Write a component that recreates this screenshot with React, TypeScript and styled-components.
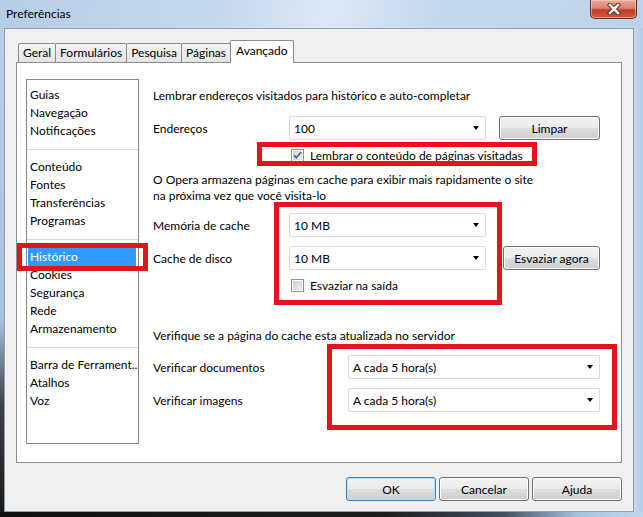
import React from "react";
import styled, { createGlobalStyle } from "styled-components";

const GlobalStyle = createGlobalStyle`
  html, body {
    margin: 0;
    padding: 0;
  }
  body {
    width: 643px;
    height: 517px;
    overflow: hidden;
    background: #1c1c1c;
    font-family: Lato, "Noto Sans", sans-serif;
    font-size: 12px;
    color: #000;
  }
`;

const sections: { items: string[] }[] = [
  { items: ["Guias", "Navegação", "Notificações"] },
  { items: ["Conteúdo", "Fontes", "Transferências", "Programas"] },
  { items: ["Histórico", "Cookies", "Segurança", "Rede", "Armazenamento"] },
  { items: ["Barra de Ferrament...", "Atalhos", "Voz"] },
];

const tabs = ["Geral", "Formulários", "Pesquisa", "Páginas", "Avançado"];

// red annotation boxes drawn over the screenshot
const marks = [
  { x: 17, y: 243, w: 131, h: 28 },
  { x: 257, y: 142, w: 280, h: 24 },
  { x: 274, y: 202, w: 228, h: 103 },
  { x: 327, y: 344, w: 290, h: 86 },
];

export default function App() {
  return (
    <>
      <GlobalStyle />
      <Window>
        <TitleBar>
          <Title>Preferências</Title>
          <CloseButton>
            <svg width="14" height="12" viewBox="0 0 14 12">
              <path d="M3 2 L11 10 M11 2 L3 10" stroke="#4a1a14" strokeWidth="4.4" strokeLinecap="square" />
              <path d="M3 2 L11 10 M11 2 L3 10" stroke="#fff" strokeWidth="2.6" strokeLinecap="square" />
            </svg>
          </CloseButton>
        </TitleBar>
        <FrameRow>
          <LeftEdge />
          <Client>
            <TabStrip>
              {tabs.map((t) => (
                <Tab key={t} $active={t === "Avançado"}>
                  {t}
                </Tab>
              ))}
            </TabStrip>
            <Panel>
              <ListBox>
                {sections.map((s, i) => (
                  <React.Fragment key={i}>
                    {i > 0 && <Separator />}
                    {s.items.map((it) => (
                      <ListItem key={it} $selected={it === "Histórico"}>
                        {it}
                      </ListItem>
                    ))}
                  </React.Fragment>
                ))}
              </ListBox>
              <Content>
                <Line>Lembrar endereços visitados para histórico e auto-completar</Line>
                <Row $top={12}>
                  <Label $w={136}>Endereços</Label>
                  <Combo $w={197}>
                    100
                    <Arrow />
                  </Combo>
                  <Button $w={101} $left={13}>
                    Limpar
                  </Button>
                </Row>
                <CheckRow $top={7}>
                  <CheckBox checked />
                  Lembrar o conteúdo de páginas visitadas
                </CheckRow>
                <Paragraph $top={9}>
                  O Opera armazena páginas em cache para exibir mais rapidamente o site
                  <br />
                  na próxima vez que você visita-lo
                </Paragraph>
                <Row $top={9}>
                  <Label $w={136}>Memória de cache</Label>
                  <Combo $w={197}>
                    10 MB
                    <Arrow />
                  </Combo>
                </Row>
                <Row $top={9}>
                  <Label $w={136}>Cache de disco</Label>
                  <Combo $w={197}>
                    10 MB
                    <Arrow />
                  </Combo>
                  <Button $w={97} $left={17}>
                    Esvaziar agora
                  </Button>
                </Row>
                <CheckRow $top={7}>
                  <CheckBox />
                  Esvaziar na saída
                </CheckRow>
                <Line $top={35}>Verifique se a página do cache esta atualizada no servidor</Line>
                <Row $top={11}>
                  <Label $w={195}>Verificar documentos</Label>
                  <Combo $w={252}>
                    A cada 5 hora(s)
                    <Arrow />
                  </Combo>
                </Row>
                <Row $top={9}>
                  <Label $w={195}>Verificar imagens</Label>
                  <Combo $w={252}>
                    A cada 5 hora(s)
                    <Arrow />
                  </Combo>
                </Row>
              </Content>
            </Panel>
            <ButtonBar>
              <Button $w={90} $focused>
                OK
              </Button>
              <Button $w={90}>Cancelar</Button>
              <Button $w={90}>Ajuda</Button>
            </ButtonBar>
          </Client>
          <RightEdge />
        </FrameRow>
        <BottomEdge />
        <Markup>
          {marks.map((m, i) => (
            <Mark key={i} style={{ left: m.x, top: m.y, width: m.w, height: m.h }} />
          ))}
        </Markup>
      </Window>
    </>
  );
}

function CheckBox({ checked }: { checked?: boolean }) {
  return (
    <svg width="13" height="13" viewBox="0 0 13 13">
      <defs>
        <linearGradient id="cbfill" x1="0" y1="0" x2="1" y2="1">
          <stop offset="0" stopColor="#cfcfcf" />
          <stop offset="1" stopColor="#f6f6f6" />
        </linearGradient>
      </defs>
      <rect x="0.5" y="0.5" width="12" height="12" fill="#fff" stroke="#8e8f8f" />
      <rect x="2.5" y="2.5" width="8" height="8" fill="url(#cbfill)" stroke="#c4c4c4" strokeWidth="0.6" />
      {checked && (
        <path d="M3 6.2 L5.3 8.8 L10 3.2" fill="none" stroke="#4b5f9a" strokeWidth="1.7" />
      )}
    </svg>
  );
}

const Window = styled.div`
  position: relative;
  width: 643px;
  height: 517px;
  display: flex;
  flex-direction: column;
  background: linear-gradient(100deg, #b6cde6 0%, #c6d8ec 30%, #dce8f5 45%, #c5d8ed 60%, #bbd0e9 100%);
`;

const TitleBar = styled.div`
  height: 28px;
  display: flex;
  justify-content: space-between;
  align-items: flex-start;
  padding-left: 6px;
`;

const Title = styled.div`
  line-height: 28px;
  color: #000;
`;

const CloseButton = styled.div`
  width: 47px;
  height: 19px;
  margin-right: 6px;
  box-sizing: border-box;
  border: 1px solid #6b2a22;
  border-top: none;
  border-radius: 0 0 5px 5px;
  background: linear-gradient(#e9a99b 0%, #d98370 45%, #c43c26 55%, #cf5a3f 100%);
  box-shadow: inset 0 0 0 1px rgba(255, 210, 200, 0.55);
  display: flex;
  align-items: center;
  justify-content: center;
`;

const FrameRow = styled.div`
  flex: 1;
  display: flex;
`;

const LeftEdge = styled.div`
  width: 4px;
  background: linear-gradient(#b9cfe8 0%, #aac3df 60%, #3a3f45 78%, #1a1a1a 100%);
`;

const RightEdge = styled.div`
  width: 9px;
  background: linear-gradient(90deg, #c9daee, #b3cbe6);
`;

const BottomEdge = styled.div`
  height: 5px;
  background: linear-gradient(90deg, #111 0%, #1e1e1e 60%, #3f4e5e 78%, #a8c3e0 90%, #c0d5ea 100%);
`;

const Client = styled.div`
  flex: 1;
  display: flex;
  flex-direction: column;
  box-sizing: border-box;
  border: 1px solid #8aa1bb;
  background: #f0f0f0;
  padding: 12px 11px 9px 11px;
`;

const TabStrip = styled.div`
  height: 22px;
  display: flex;
  align-items: flex-end;
  padding-left: 2px;
  margin-bottom: -1px;
  position: relative;
  z-index: 1;
`;

const Tab = styled.div<{ $active?: boolean }>`
  box-sizing: border-box;
  height: ${(p) => (p.$active ? 23 : 20)}px;
  padding: 0 ${(p) => (p.$active ? 5 : 4)}px;
  margin-right: -1px;
  border: 1px solid #898c95;
  border-bottom: ${(p) => (p.$active ? "none" : "1px solid #898c95")};
  border-radius: 2px 2px 0 0;
  background: ${(p) => (p.$active ? "#fff" : "linear-gradient(#f3f3f3, #e4e4e4)")};
  line-height: ${(p) => (p.$active ? 20 : 18)}px;
  color: #000;
`;

const Panel = styled.div`
  height: 401px;
  box-sizing: border-box;
  border: 1px solid #898c95;
  background: #fff;
  display: flex;
  gap: 14px;
  padding: 16px 9px 18px 9px;
`;

const ListBox = styled.div`
  width: 113px;
  box-sizing: border-box;
  border: 1px solid #828790;
  padding: 6px 2px 6px 1px;
  display: flex;
  flex-direction: column;
  overflow: hidden;
`;

const ListItem = styled.div<{ $selected?: boolean }>`
  height: 18px;
  line-height: 18px;
  padding-left: 2px;
  white-space: nowrap;
  background: ${(p) => (p.$selected ? "#3399ff" : "transparent")};
  color: ${(p) => (p.$selected ? "#fff" : "#000")};
`;

const Separator = styled.div`
  height: 18px;
  margin: 0 -2px 0 -1px;
  display: flex;
  align-items: center;
  &::after {
    content: "";
    flex: 1;
    height: 1px;
    background: #dadada;
  }
`;

const Content = styled.div`
  flex: 1;
  display: flex;
  flex-direction: column;
  padding-top: 9px;
`;

const Line = styled.div<{ $top?: number }>`
  line-height: 16px;
  margin-top: ${(p) => p.$top ?? 0}px;
`;

const Paragraph = styled(Line)``;

const Row = styled.div<{ $top?: number }>`
  display: flex;
  align-items: center;
  height: 24px;
  margin-top: ${(p) => p.$top ?? 0}px;
`;

const Label = styled.div<{ $w: number }>`
  width: ${(p) => p.$w}px;
  flex-shrink: 0;
`;

const Combo = styled.div<{ $w: number }>`
  width: ${(p) => p.$w}px;
  height: 24px;
  box-sizing: border-box;
  border: 1px solid #dcdcdc;
  border-radius: 2px;
  background: #fff;
  display: flex;
  align-items: center;
  justify-content: space-between;
  padding: 0 6px 0 4px;
`;

const Arrow = styled.span`
  width: 0;
  height: 0;
  border-left: 3.5px solid transparent;
  border-right: 3.5px solid transparent;
  border-top: 4px solid #000;
`;

const CheckRow = styled.div<{ $top?: number }>`
  display: flex;
  align-items: center;
  gap: 6px;
  height: 16px;
  padding-left: 138px;
  margin-top: ${(p) => p.$top ?? 0}px;
`;

const Button = styled.button<{ $w: number; $left?: number; $focused?: boolean }>`
  width: ${(p) => p.$w}px;
  height: 24px;
  margin-left: ${(p) => p.$left ?? 0}px;
  box-sizing: border-box;
  padding: 0;
  border: 1px solid ${(p) => (p.$focused ? "#3c7fb1" : "#707070")};
  border-radius: 3px;
  background: linear-gradient(#f2f2f2 0%, #ebebeb 50%, #dddddd 51%, #cfcfcf 100%);
  box-shadow: inset 0 0 0 1px ${(p) => (p.$focused ? "#b9def5" : "#fbfbfb")};
  font: inherit;
  color: #000;
`;

const ButtonBar = styled.div`
  display: flex;
  justify-content: flex-end;
  gap: 3px;
  margin-top: 14px;
`;

const Markup = styled.div`
  position: absolute;
  inset: 0;
  pointer-events: none;
`;

const Mark = styled.div`
  position: absolute;
  box-sizing: border-box;
  border: 5px solid #e3141c;
`;
